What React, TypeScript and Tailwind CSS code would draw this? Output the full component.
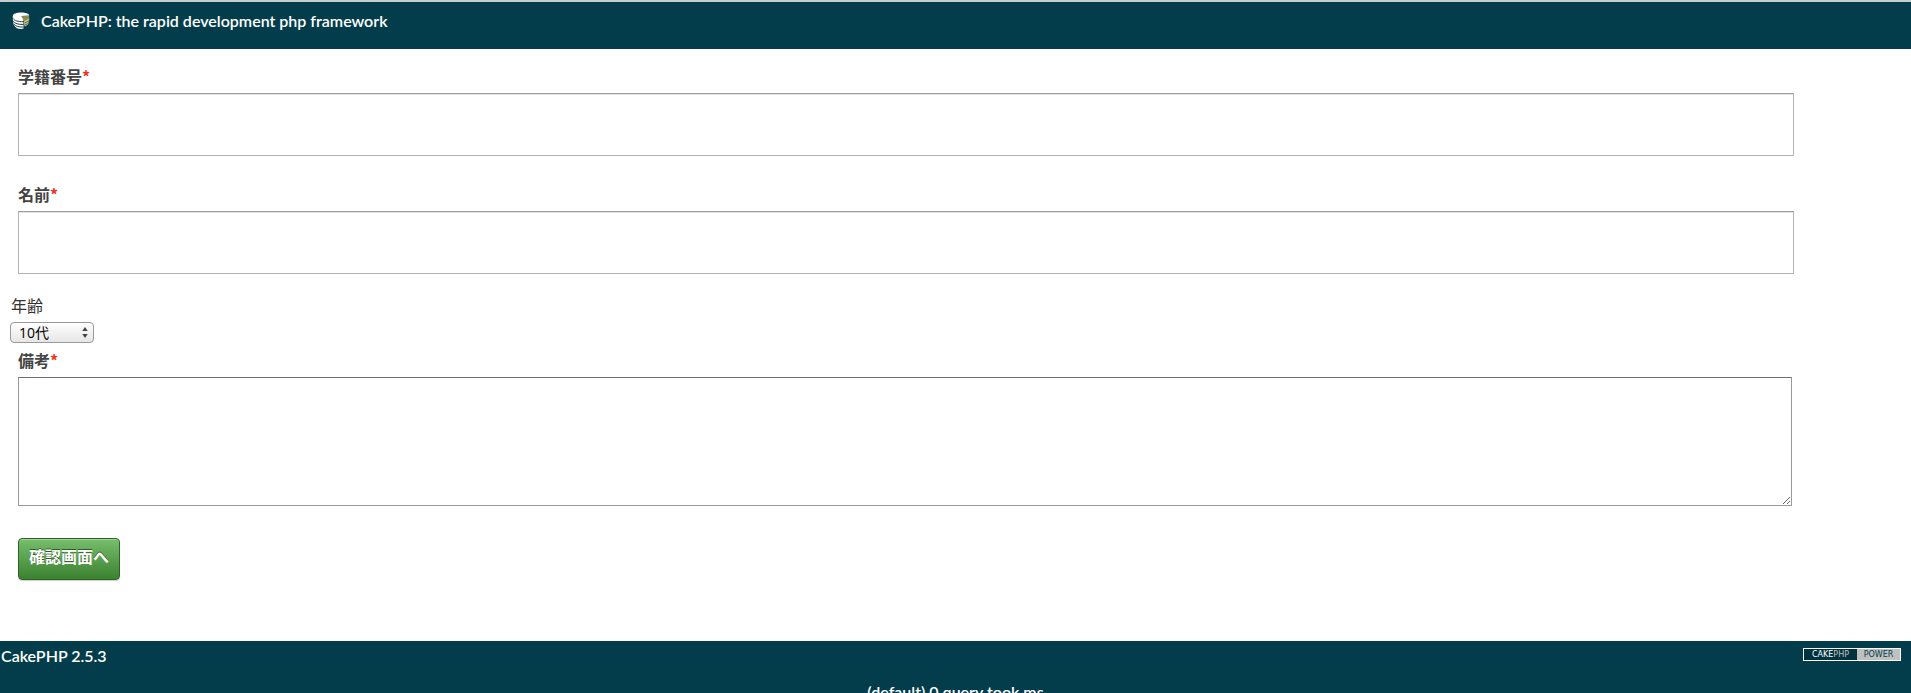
import React, { useState } from 'react';

const AGES = ['10代', '20代', '30代', '40代', '50代', '60代以上'];

function CakeIcon() {
  return (
    <svg className="h-[18px] w-[18px]" viewBox="0 0 18 18" aria-hidden="true">
      <path d="M.8 4c0 3 .2 6 .9 8.500C3 15.500 5.500 17 9 17l2.600-.4-.4-8.600z" fill="#fbfbf8" />
      <path d="M8.600 4.200 11.600 8.500v3.200c3-.6 5-1.600 5.600-3.200V3.800z" fill="#8f8c52" />
      <path d="M12 9.200 17.200 6.500 16.400 12c-.8 1.200-2.200 2-4 2.500z" fill="#c9c590" />
      <path d="M.8 4C1 1.800 4.500.6 9 .6s8 1 8.200 3L9.200 4l2.400 4.300C5 8.600 1 6.800.8 4z" fill="#fff" />
      <path
        d="M1 6.500c1.500 2.200 5 3.200 10.500 3.200M1.200 9.300c1.500 2.200 5 3.200 10.300 3.200M2 12.300c1.500 2 4.500 2.800 9.500 2.800"
        fill="none"
        stroke="#26434b"
        strokeWidth="1"
      />
      <path d="m12.500 11 4.500-2M12.500 13.300l4-2" stroke="#4b5540" strokeWidth=".8" />
    </svg>
  );
}

function PowerBadge() {
  return (
    <a
      href="#power"
      className="flex h-[13px] w-[98px] border border-white font-['DejaVu_Sans'] text-[8px] leading-[11px] font-normal"
    >
      <span className="w-[53px] bg-[#003340] text-center text-white">
        CAKE<span className="text-[#c0c0c0]">PHP</span>
      </span>
      <span className="flex-1 bg-[#c0c0c0] text-center text-[#003d4c]">POWER</span>
    </a>
  );
}

function FieldLabel({ htmlFor, children }: { htmlFor: string; children: React.ReactNode }) {
  return (
    <label htmlFor={htmlFor} className="mb-1 block text-base leading-6 font-bold text-[#444]">
      {children}
      <span className="font-['Noto_Sans_CJK_JP',sans-serif] leading-none text-[#e32]">*</span>
    </label>
  );
}

function TextField({ id, label }: { id: string; label: string }) {
  return (
    <div className="px-2 pb-5">
      <FieldLabel htmlFor={id}>{label}</FieldLabel>
      <input
        id={id}
        type="text"
        required
        className="block h-[63px] w-full border border-[#b3b3b3] border-t-[#a0a0a0] bg-white px-2 text-2xl shadow-[inset_0_1px_0_#e2e2e2] outline-none"
      />
    </div>
  );
}

export default function App() {
  const [age, setAge] = useState(AGES[0]);

  return (
    <div className="min-h-screen bg-white font-['Lato','Noto_Sans_CJK_JP',sans-serif] text-[#333]">
      <header className="border-t-2 border-[#c4cccc] bg-[#033d4b] px-3 pt-[7px] pb-4">
        <h1 className="text-base leading-6 font-semibold text-white">
          <a href="#home" className="flex items-center gap-[11px]">
            <CakeIcon />
            CakePHP: the rapid development php framework
          </a>
        </h1>
      </header>

      <main className="pt-4 pr-[109px] pb-[61px] pl-2.5">
        <form onSubmit={(e) => e.preventDefault()}>
          <TextField id="student-number" label="学籍番号" />
          <div className="mt-[7px]">
            <TextField id="name" label="名前" />
          </div>

          <div className="mb-1.5">
            <label htmlFor="age" className="mb-1 block pl-px text-base leading-6 text-[#333]">
              年齢
            </label>
            <div className="relative w-[84px]">
              <select
                id="age"
                value={age}
                onChange={(e) => setAge(e.target.value)}
                className="block h-[21px] w-full appearance-none rounded-[4px] border border-[#999] bg-linear-to-b from-white to-[#e6e6e6] pl-2 font-['Open_Sans','Noto_Sans_CJK_JP',sans-serif] text-sm leading-[18px] text-black"
              >
                {AGES.map((a) => (
                  <option key={a}>{a}</option>
                ))}
              </select>
              <svg className="pointer-events-none absolute top-[5px] right-1.5 h-[11px] w-[6px]" viewBox="0 0 6 11">
                <path d="M3 0l2.700 4H.3zM3 11 .3 7h5.400z" fill="#444" />
              </svg>
            </div>
          </div>

          <div className="pr-2.5 pl-2">
            <FieldLabel htmlFor="remarks">備考</FieldLabel>
            <textarea
              id="remarks"
              required
              className="block h-[129px] w-full border border-[#999] border-t-[#707070] bg-white p-1 text-2xl outline-none"
            />
            <button
              type="submit"
              className="mt-8 block h-[42px] rounded-[4px] border border-[#2d6324] bg-linear-to-b from-[#76bf6b] to-[#3b8230] px-2.5 pb-1 text-base leading-6 font-bold text-white shadow-[inset_0_1px_0_rgba(255,255,255,0.3),0_1px_1px_rgba(0,0,0,0.2)] [text-shadow:0_-1px_0_rgba(0,0,0,0.5)]"
            >
              確認画面へ
            </button>
          </div>
        </form>
      </main>

      <footer className="bg-[#033d4b] text-base leading-6 font-semibold text-white">
        <div className="flex items-start justify-between pt-[3px] pr-2.5 pl-px">
          <p>CakePHP 2.5.3</p>
          <div className="pt-1">
            <PowerBadge />
          </div>
        </div>
        <table className="mt-3 w-full">
          <caption className="text-center">(default) 0 query took ms</caption>
        </table>
      </footer>
    </div>
  );
}
